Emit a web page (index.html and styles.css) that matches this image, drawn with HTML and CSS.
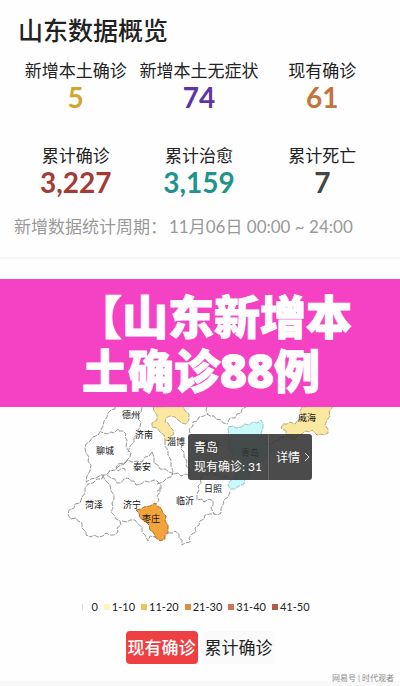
FILE: index.html
```html
<!DOCTYPE html>
<html lang="zh-CN">
<head>
  <meta charset="UTF-8">
  <meta name="viewport" content="width=device-width, initial-scale=1.0">
  <title>山东数据概览</title>
  <link rel="stylesheet" href="styles.css">
</head>
<body>
  <!-- Overview Section -->
  <section class="overview">
    <h1>山东数据概览</h1>
    <dl class="stats">
      <div class="stat"><dt>新增本土确诊</dt><dd class="yellow">5</dd></div>
      <div class="stat"><dt>新增本土无症状</dt><dd class="purple">74</dd></div>
      <div class="stat"><dt>现有确诊</dt><dd class="orange">61</dd></div>
      <div class="stat"><dt>累计确诊</dt><dd class="red">3,227</dd></div>
      <div class="stat"><dt>累计治愈</dt><dd class="teal">3,159</dd></div>
      <div class="stat"><dt>累计死亡</dt><dd class="dark">7</dd></div>
    </dl>
    <p class="period"><span>新增数据统计周期：</span><span>11月06日 00:00 ~ 24:00</span></p>
  </section>

  <!-- Headline Banner -->
  <h2 class="banner">【山东新增本<br>土确诊88例</h2>

  <!-- Map Section -->
  <section class="map-section">
    <div class="map">
      <svg viewBox="0 407 400 150" role="img" aria-label="山东地图">
        <g class="region">
          <!-- Liaocheng, Dezhou -->
          <path d="M115 407l0 2-4 1-3 3-1 4-3 4-1 5-3 6-2 3-5 2-3 4-4 3-1 4 1 5 3 4-1 4 3 4-1 6-3 5-1 6 5-3 5-1 5-3 5 0 4-4 5-1 4-4 5-2 3-4 3-3 1-4-3-3-2-3 1-7-2-3 1-3-3-3-4 0-1-2-4 4-3-1-4 2-6-2"/>
          <path d="M142 407l-1 5-3 3 0 4 3 3-1 5-2 3 0 4-4 3 0 5-4 4-2 6"/>
          <!-- Jinan, Tai'an, Zibo -->
          <path d="M165 440l0 6 3 4 0 5 3 5 0 6 2 5-1 4"/>
          <path d="M152 452l-3 4-4 1-3 5-6-1-4 1-4-2-3 3-7 1-2 4 2 3 4-3 3 1 0 3M152 452l2 5 0 6 4 2 2 4 5 0 4 3 5 2"/>
          <path d="M110 470l-3 5 4 3 4 1 2 4 4 0 3-4 4-1 3 3 3 0 2 4 5-1 4-3 4 1 5-2 3 1 4 4 0 4-4 2M157 484l6-2 4-4 4-1 2-4"/>
          <path d="M182 443l-1 6 3 3 0 5 3 4-1 5 4 3 0 6M174 474l4-1 3 3 5-2 4 2"/>
          <!-- Heze, Jining -->
          <path d="M103 475l-1 4-5 0-4 4-5 1-3 4 0 5-3 4-2 6-5 1-1 4-5 2-1 5 3 4 5-1 2 3 4 2 0 5 4 4 0 3 5 2 3-2 4 2 5-1 3-3 4 2 4 0 4-3-1-4 4-3-1-4-4-2-2-4-3-3 2-4-1-5 2-4 0-4-3-4-1-6-4-4-2-3z"/>
          <path d="M122 521l5 1 3-2 5 0 3 4 4 3 0 5 3 3 3 6 2-5 5 1M160 487l0 5-3 4 2 4-3 4"/>
          <!-- Linyi, Rizhao -->
          <path d="M168 533l5 0 2-2 4 3 0 4 3 2 0 5 3-2 5-1-1-4 3-4 4-2-1-4 4-3 1-4 4-2 1-4 4-1 6 0M200 479l1 4-3 3 1 4-2 4 0 6 5-1 2 3 5-3 4 2 0 4-2 3 3 6 4 1 3-2 0-5 2-3 1-5 4-3 2-5"/>
          <!-- Weifang -->
          <path d="M190 433l-1-4 4-3 0-4 4-1 2-4 5-1 3-2 3 2 4 0 2 3 5 1 2 3 5 1M207 407l-1 3 2 5M228 422l2-4 5 0 2-4 4-1 1-4 4-2"/>
          <path d="M200 479l4-5 4 1 3-4 4 4 4 0 3 3 3-2 5 3M285 437l-4 0-2 3-5 1-2 3-4 0-3 3"/>
        </g>
        <path class="region level-1" d="M153 407l1 4 3 4 0 5-5 3 0 4 5 1 3 4 4 3 1 5 4 1 2-5 3-2-1-4-3-3-2-4-3-1 1-4 4-2 5 1 3 3 4 3 4 1 3-4 0-6-4-3-2-5z"/>
        <path class="region level-1" d="M302 407l-2 4 2 4 0 4-4 1-3 4-5-2-3 2-4 0-2 4 5 3 0 4 4 3 5 1 4-4 3-1 3-3 5 1 2-2 5 5 4-1 3 1 4-2 0-4-3-4 2-5 3-4-1-4 3-4 0-4z"/>
        <path class="region active" d="M228 427l5-1 3 2 6-1 2-3 5 1 4-3 4 1 4-3 2 4 0 4-2 5 2 5 3 2 0 4 4 3 2 5-5 2-3 5-6 2-1 6-6 3-1 5-5 4-1 5-5 2-4 3-5 0-2-4 2-4 5-3 1-5 5-5-3-5-5-4-1-7-4-4 1-6z"/>
        <path class="region level-3" d="M136 510l5-1 3-2 6-1 5-3 2 3 4 2 2 5 3 3-1 5 3 4 0 8-3 2 0 4-5 2-5-4-1-4-4-3-1-5-4-4-5-3-1-5z"/>
        <g class="city">
          <text x="131" y="418">德州</text>
          <text x="144" y="438">济南</text>
          <text x="176" y="445">淄博</text>
          <text x="105" y="454">聊城</text>
          <text x="142" y="470">泰安</text>
          <text x="94" y="508">菏泽</text>
          <text x="132" y="508">济宁</text>
          <text x="151" y="522">枣庄</text>
          <text x="185" y="504">临沂</text>
          <text x="213" y="492">日照</text>
          <text x="210" y="448">潍坊</text>
          <text x="250" y="456">青岛</text>
          <text x="307" y="421">威海</text>
        </g>
      </svg>
      <div class="tooltip">
        <div class="tooltip-text">青岛<br>现有确诊: 31</div>
        <a href="#" class="tooltip-link">详情
          <svg viewBox="0 0 6 10"><path d="M1 1l4 4-4 4"/></svg>
        </a>
      </div>
    </div>

    <ul class="legend">
      <li class="l0">0</li>
      <li class="l1">1-10</li>
      <li class="l2">11-20</li>
      <li class="l3">21-30</li>
      <li class="l4">31-40</li>
      <li class="l5">41-50</li>
    </ul>

    <div class="tabs">
      <button type="button" class="tab selected">现有确诊</button>
      <button type="button" class="tab">累计确诊</button>
    </div>
  </section>
  <footer class="credit">网易号 | 时代观者</footer>
</body>
</html>
```
FILE: styles.css
```css
* {
  box-sizing: border-box;
}
body {
  margin: 0;
  font-family: Lato, "Noto Sans CJK SC", sans-serif;
  background-color: #fefefe;
  color: #222;
}
h1, h2, p, dl, dd, ul {
  margin: 0;
  padding: 0;
}
.overview {
  padding: 12px 16px 16px 14px;
  border-bottom: 2px solid #f7f7f7;
}
h1 {
  padding-left: 4px;
  font-size: 25px;
  line-height: 36px;
  font-weight: 500;
}
.stats {
  display: grid;
  grid-template-columns: repeat(3, 1fr);
  row-gap: 33px;
  margin-top: 11px;
}
.stat {
  text-align: center;
  white-space: nowrap;
}
dt {
  font-size: 17px;
  line-height: 24px;
}
dd {
  font-size: 28px;
  line-height: 28px;
  font-weight: 700;
}
.yellow { color: #d0a62f; }
.purple { color: #5c35a8; }
.orange { color: #c5733d; }
.red { color: #a23a36; }
.teal { color: #20948a; }
.dark { color: #444; }
.period {
  display: flex;
  gap: 2px;
  margin-top: 17px;
  font-size: 17px;
  line-height: 28px;
  color: #999;
}
.banner {
  margin-top: 20px;
  padding: 10px 0 10px 82px;
  background-color: #f542c5;
  color: #fff;
  font-family: "Open Sans", "Noto Sans CJK SC", sans-serif;
  font-size: 46px;
  line-height: 54px;
  font-weight: 800;
  text-indent: -6px;
  -webkit-text-stroke: 1px #fff;
}
.map {
  position: relative;
}
.map > svg {
  display: block;
  width: 100%;
}
.region {
  fill: none;
  stroke: #999;
  stroke-width: 1;
  stroke-dasharray: 5 1;
}
.level-1 { fill: #fbe7a0; stroke: #b5ab85; }
.level-3 { fill: #f3a33c; stroke: #a5762f; }
.active { fill: #c8fafc; stroke: #9bc4c6; }
.city {
  font-size: 9px;
  text-anchor: middle;
  fill: #111;
}
.tooltip {
  position: absolute;
  top: 18%;
  left: 47%;
  display: flex;
  align-items: center;
  border-radius: 3px;
  background-color: rgba(50, 50, 50, 0.88);
  color: #fff;
  font-size: 12px;
  line-height: 19px;
}
.tooltip-text {
  padding: 4px 6px;
  border-right: 1px solid #666;
}
.tooltip-link {
  display: flex;
  align-items: center;
  gap: 4px;
  padding: 0 2px 0 7px;
  color: #fff;
  text-decoration: none;
}
.tooltip-link svg {
  width: 6px;
  height: 10px;
  fill: none;
  stroke: #ddd;
}
.legend {
  display: flex;
  justify-content: center;
  gap: 6px;
  margin-top: 42px;
  padding-right: 8px;
  list-style: none;
  font-size: 11px;
  line-height: 16px;
}
.legend li {
  display: flex;
  align-items: center;
  gap: 2px;
}
.legend li::before {
  content: "";
  width: 6px;
  height: 6px;
}
.legend .l0::before { width: 1px; margin-right: 6px; background-color: #ddd; }
.legend .l1::before { background-color: #fdf8b8; }
.legend .l2::before { background-color: #e9c55e; }
.legend .l3::before { background-color: #dc8c3c; }
.legend .l4::before { background-color: #cf7358; }
.legend .l5::before { background-color: #b15c46; }
.tabs {
  display: flex;
  justify-content: center;
  gap: 5px;
  margin-top: 16px;
}
.tab {
  padding: 0 2px;
  border: none;
  border-radius: 4px;
  background-color: #fafafa;
  color: #222;
  font-family: inherit;
  font-size: 17px;
  line-height: 33px;
}
.tab.selected {
  background-color: #ee4042;
  color: #fff;
  font-weight: 500;
}
.credit {
  margin-top: 7px;
  padding-right: 6px;
  text-align: right;
  font-size: 8px;
  line-height: 15px;
  color: #888;
  background: linear-gradient(transparent 70%, #f8f8f8 70%);
}
```
